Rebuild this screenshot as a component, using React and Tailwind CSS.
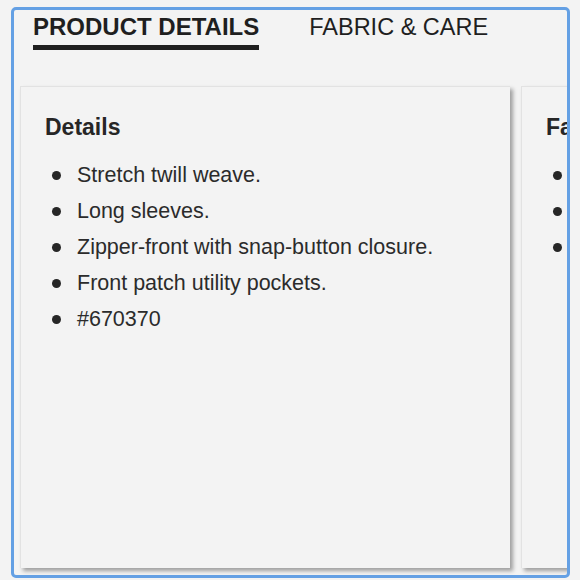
import React from "react";

const details = [
  "Stretch twill weave.",
  "Long sleeves.",
  "Zipper-front with snap-button closure.",
  "Front patch utility pockets.",
  "#670370",
];

const care = ["Cotton/spandex.", "Machine wash.", "Imported."];

const Card = ({ title, items, className }) => (
  <div
    className={`shrink-0 h-[482px] bg-[#f3f3f3] border-t border-l border-[#e2e2e2] shadow-[3px_3px_4px_rgba(0,0,0,0.35)] pt-[24px] pl-[24px] ${className}`}
  >
    <h3 className="text-[23px] font-bold leading-[32px] text-[#262626]">{title}</h3>
    <ul className="mt-[14px]">
      {items.map((item) => (
        <li key={item} className="flex items-center h-[36px] text-[21.5px] text-[#2b2b2b] whitespace-nowrap">
          <span className="w-[9px] h-[9px] rounded-full bg-[#262626] ml-[7px] mr-[16px]" />
          {item}
        </li>
      ))}
    </ul>
  </div>
);

export default function App() {
  return (
    <div
      className="w-[580px] h-[580px] bg-[#f3f3f3] pt-[7px] pl-[11px]"
      style={{ fontFamily: '"Liberation Sans", Arial, sans-serif' }}
    >
      <div className="w-[559px] h-[571px] border-[3px] border-[#64a0e4] rounded-[5px] overflow-hidden bg-[#f3f3f3]">
        <div className="flex items-start pl-[19px] h-[76px]">
          <div className="flex flex-col">
            <span className="text-[24px] font-bold leading-[34px] text-[#1f1f1f]">PRODUCT DETAILS</span>
            <span className="h-[5px] bg-[#1f1f1f] mt-[1px]" />
          </div>
          <span className="ml-[50px] text-[23.5px] leading-[34px] text-[#1f1f1f]">FABRIC &amp; CARE</span>
        </div>
        <div className="flex gap-[11px] pl-[6px]">
          <Card title="Details" items={details} className="w-[490px]" />
          <Card title="Fabric & Care" items={care} className="w-[300px]" />
        </div>
      </div>
    </div>
  );
}
